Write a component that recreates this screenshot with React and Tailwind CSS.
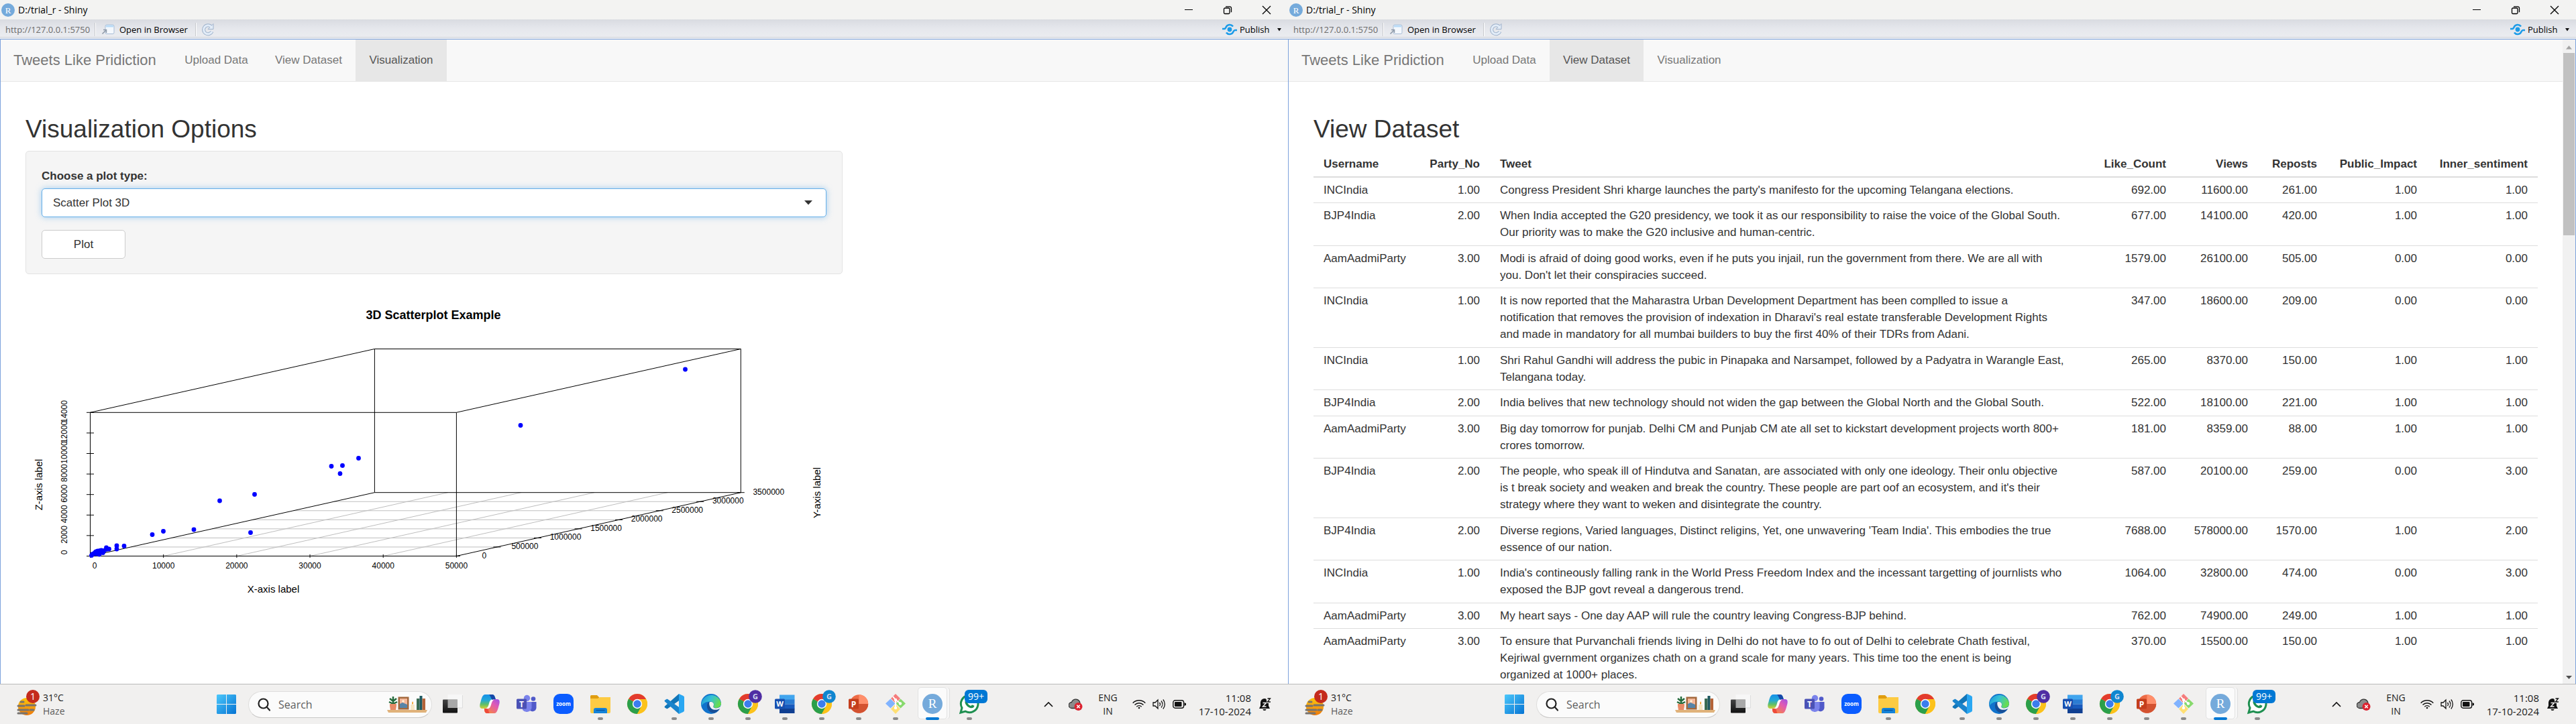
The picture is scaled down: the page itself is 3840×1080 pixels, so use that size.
import React from "react";

const rows = [
  ["INCIndia", "1.00", "Congress President Shri kharge launches the party's manifesto for the upcoming Telangana elections.", "692.00", "11600.00", "261.00", "1.00", "1.00"],
  ["BJP4India", "2.00", "When India accepted the G20 presidency, we took it as our responsibility to raise the voice of the Global South.\nOur priority was to make the G20 inclusive and human-centric.", "677.00", "14100.00", "420.00", "1.00", "1.00"],
  ["AamAadmiParty", "3.00", "Modi is afraid of doing good works, even if he puts you injail, run the government from there. We are all with\nyou. Don't let their conspiracies succeed.", "1579.00", "26100.00", "505.00", "0.00", "0.00"],
  ["INCIndia", "1.00", "It is now reported that the Maharastra Urban Development Department has been complled to issue a\nnotification that removes the provision of indexation in Dharavi's real estate transferable Development Rights\nand made in mandatory for all mumbai builders to buy the first 40% of their TDRs from Adani.", "347.00", "18600.00", "209.00", "0.00", "0.00"],
  ["INCIndia", "1.00", "Shri Rahul Gandhi will address the pubic in Pinapaka and Narsampet, followed by a Padyatra in Warangle East,\nTelangana today.", "265.00", "8370.00", "150.00", "1.00", "1.00"],
  ["BJP4India", "2.00", "India belives that new technology should not widen the gap between the Global North and the Global South.", "522.00", "18100.00", "221.00", "1.00", "1.00"],
  ["AamAadmiParty", "3.00", "Big day tomorrow for punjab. Delhi CM and Punjab CM ate all set to kickstart development projects worth 800+\ncrores tomorrow.", "181.00", "8359.00", "88.00", "1.00", "1.00"],
  ["BJP4India", "2.00", "The people, who speak ill of Hindutva and Sanatan, are associated with only one ideology. Their onlu objective\nis t break society and weaken and break the country. These people are part oof an ecosystem, and it's their\nstrategy where they want to weken and disintegrate the country.", "587.00", "20100.00", "259.00", "0.00", "3.00"],
  ["BJP4India", "2.00", "Diverse regions, Varied languages, Distinct religins, Yet, one unwavering 'Team India'. This embodies the true\nessence of our nation.", "7688.00", "578000.00", "1570.00", "1.00", "2.00"],
  ["INCIndia", "1.00", "India's contineously falling rank in the World Press Freedom Index and the incessant targetting of journlists who\nexposed the BJP govt reveal a dangerous trend.", "1064.00", "32800.00", "474.00", "0.00", "3.00"],
  ["AamAadmiParty", "3.00", "My heart says - One day AAP will rule the country leaving Congress-BJP behind.", "762.00", "74900.00", "249.00", "1.00", "1.00"],
  ["AamAadmiParty", "3.00", "To ensure that Purvanchali friends living in Delhi do not have to fo out of Delhi to celebrate Chath festival,\nKejriwal gvernment organizes chath on a grand scale for many years. This time too the enent is being\norganized at 1000+ places.", "370.00", "15500.00", "150.00", "1.00", "1.00"],
];

const columns = [
  ["Username", "w-[156px] text-left"],
  ["Party_No", "w-[107px] text-right"],
  ["Tweet", "text-left"],
  ["Like_Count", "w-[126px] text-right"],
  ["Views", "w-[122px] text-right"],
  ["Reposts", "w-[103px] text-right"],
  ["Public_Impact", "w-[149px] text-right"],
  ["Inner_sentiment", "w-[165px] text-right"],
];

/* ---------- window chrome ---------- */

function TitleBar() {
  return (
    <header className="flex h-[29px] items-center bg-[#f3f3f2] text-black">
      <svg className="ml-0.5 size-5" viewBox="0 0 20 20" aria-hidden="true">
        <circle cx="10" cy="10" r="10" fill="#75aadb" />
        <text x="10" y="14.500" fontSize="13" fill="#fff" textAnchor="middle" fontFamily="Liberation Serif, serif">R</text>
      </svg>
      <h1 className="ml-[5px] text-[14px] leading-5">D:/trial_r - Shiny</h1>
      <div className="ml-auto flex h-full items-center">
        <button aria-label="Minimize" className="flex h-full w-[58px] items-center justify-center">
          <svg width="14" height="14" viewBox="0 0 14 14"><path d="M1 6.500h12" stroke="#000" /></svg>
        </button>
        <button aria-label="Restore" className="flex h-full w-[58px] items-center justify-center">
          <svg width="14" height="14" viewBox="0 0 14 14" fill="none" stroke="#000" strokeWidth="1.300">
            <rect x="1.500" y="4" width="8.500" height="8.500" rx="1.500" />
            <path d="M4 1.800h6a2.500 2.500 0 0 1 2.500 2.500v6" />
          </svg>
        </button>
        <button aria-label="Close" className="mr-[3px] flex h-full w-[58px] items-center justify-center">
          <svg width="14" height="14" viewBox="0 0 14 14"><path d="M1 1l12 12M13 1L1 13" stroke="#000" strokeWidth="1.300" /></svg>
        </button>
      </div>
    </header>
  );
}

function Toolbar() {
  return (
    <div className="flex h-[30px] flex-col border-b border-[#7da2dc] bg-[#e9ebef]">
      <div className="flex h-[27px] items-center border-b border-[#d3d6dc] bg-gradient-to-b from-[#d9dbe1] via-[#e5e7ec] to-[#ebecf0] pt-1 text-[13px] leading-5 text-black">
        <span className="ml-2 w-[125px] whitespace-nowrap text-[#6b6b6b]">http://127.0.0.1:5750</span>
        <span className="ml-2 h-5 w-0.5 border-r border-white bg-[#c6c8cc]" />
        <button className="ml-2 flex items-center">
          <svg width="20" height="17" viewBox="0 0 20 17" fill="none" aria-hidden="true">
            <rect x="6" y="1" width="13" height="13.500" rx="2" fill="#f4f8fd" stroke="#a9bdd6" />
            <path d="M7 4.500V3a1.500 1.500 0 0 1 1.500-1.500h8A1.500 1.500 0 0 1 18 3v1.500z" fill="#b9dbf7" />
            <path d="M1.500 14.500l5-5M3 8.500h4.500V13" stroke="#8d99a8" strokeWidth="1.500" />
          </svg>
          <span className="ml-[7px] w-[103px] whitespace-nowrap text-left">Open in Browser</span>
        </button>
        <span className="ml-2.5 h-5 w-0.5 border-r border-white bg-[#c6c8cc]" />
        <button aria-label="Reload" className="ml-[7px]">
          <svg width="20" height="20" viewBox="0 0 20 20" fill="none">
            <path d="M15 6A6.500 6.500 0 1 0 16 13" stroke="#9fb2cb" strokeWidth="5" />
            <path d="M18 1.500v8h-8z" fill="#e2ecf8" stroke="#9fb2cb" />
            <path d="M15 6A6.500 6.500 0 1 0 16 13" stroke="#e2ecf8" strokeWidth="3" />
          </svg>
        </button>
        <button className="ml-auto mr-2.5 flex items-center">
          <svg width="22" height="18" viewBox="0 0 22 18" fill="none" stroke="#1b9be8" strokeWidth="2.600" aria-hidden="true">
            <circle cx="11" cy="9" r="3.400" fill="#1b9be8" stroke="none" />
            <path d="M0 8h3c1.500 0 1.800-1 2.600-2.500C7.500 1.500 13 .5 16 4.500" />
            <path d="M22 10h-3c-1.500 0-1.800 1-2.600 2.500C14.500 16.500 9 17.500 6 13.500" />
          </svg>
          <span className="ml-1 w-[45px] text-left">Publish</span>
          <svg className="ml-[11px]" width="6" height="5" viewBox="0 0 6 5" aria-hidden="true"><path d="M0 0h6L3 4.500z" fill="#111" /></svg>
        </button>
      </div>
    </div>
  );
}

function NavBar({ active }) {
  return (
    <nav className="flex h-[63px] items-start border-b border-[#e7e7e7] bg-[#f8f8f8] text-[#777]">
      <a href="#home" className="whitespace-nowrap px-[19px] pt-[18px] text-[22px] leading-[25px]">
        <span className="block w-[216px]">Tweets Like Pridiction</span>
      </a>
      {[
        ["Upload Data", "w-[135px]"],
        ["View Dataset", "w-[140px]"],
        ["Visualization", "w-[136px]"],
      ].map(([label, width]) => (
        <a
          key={label}
          href={"#" + label.toLowerCase().replace(" ", "-")}
          aria-current={label === active ? "page" : undefined}
          className={`flex h-[62px] justify-center whitespace-nowrap pt-[18px] text-[17px] leading-[25px] ${width} ${
            label === active ? "bg-[#e7e7e7] text-[#555]" : ""
          }`}
        >
          {label}
        </a>
      ))}
    </nav>
  );
}

/* ---------- 3D scatter plot ---------- */

const O = { x: 134.5, y: 829.5 };
const W = 545.9;
const H = 214.2;
const D = { x: 423.9, y: -94.8 };

const points = [
  [227, 797.5], [243.500, 792.5], [289, 790], [373.500, 794.5], [327.500, 747], [379.500, 737.5],
  [494, 695.5], [510.500, 694.5], [507, 706.5], [534.500, 683.5], [776, 634.5], [1021.500, 551],
  [185, 814.5], [174, 814], [174, 819], [158.500, 817], [162.500, 819], [136.500, 828.5], [138, 826.5],
  [140, 826], [141.500, 824.5], [143, 823], [144, 826], [145.500, 822], [147, 824.5], [148, 827],
  [149, 821.5], [150.500, 824], [152, 822], [153.500, 824.5], [155, 821.5], [158.500, 819.5], [151, 821],
];

function ScatterPlot() {
  const line = (x1, y1, x2, y2, key, stroke = "#000") => (
    <line key={key} x1={x1} y1={y1} x2={x2} y2={y2} stroke={stroke} />
  );
  const steps = (n) => Array.from({ length: n }, (_, i) => i);
  return (
    <svg
      className="mt-[15px] block w-[1217px] max-w-full"
      viewBox="38 424 1217 500"
      role="img"
      aria-label="3D Scatterplot Example"
      fontFamily="Liberation Sans, Arial, sans-serif"
      fill="none"
    >
      <text x="646" y="476" fontSize="18" fontWeight="bold" textAnchor="middle" fill="#000">3D Scatterplot Example</text>
      {steps(4).map((i) => {
        const x = O.x + (W / 5) * (i + 1);
        return line(x, O.y, x + D.x, O.y + D.y, "gx" + i, "#bebebe");
      })}
      {steps(6).map((i) => {
        const t = (i + 1) / 7;
        return line(O.x + D.x * t, O.y + D.y * t, O.x + W + D.x * t, O.y + D.y * t, "gy" + i, "#bebebe");
      })}
      <g>
        {line(O.x, O.y, O.x + W, O.y, "a")}
        {line(O.x, O.y, O.x, O.y - H, "b")}
        {line(O.x, O.y - H, O.x + W, O.y - H, "c")}
        {line(O.x + W, O.y, O.x + W, O.y - H, "d")}
        {line(O.x, O.y, O.x + D.x, O.y + D.y, "e")}
        {line(O.x, O.y - H, O.x + D.x, O.y - H + D.y, "f")}
        {line(O.x + W, O.y, O.x + W + D.x, O.y + D.y, "g")}
        {line(O.x + W, O.y - H, O.x + W + D.x, O.y - H + D.y, "h")}
        {line(O.x + D.x, O.y + D.y, O.x + D.x + W, O.y + D.y, "i")}
        {line(O.x + D.x, O.y - H + D.y, O.x + D.x + W, O.y - H + D.y, "j")}
        {line(O.x + D.x, O.y + D.y, O.x + D.x, O.y - H + D.y, "k")}
        {line(O.x + W + D.x, O.y + D.y, O.x + W + D.x, O.y - H + D.y, "l")}
        {steps(6).map((i) => line(O.x + (W / 5) * i, O.y - 2.5, O.x + (W / 5) * i, O.y + 2.5, "tx" + i))}
        {steps(8).map((i) => line(O.x - 5.5, O.y - (H / 7) * i, O.x + 5.5, O.y - (H / 7) * i, "tz" + i))}
        {steps(8).map((i) =>
          line(O.x + W + (D.x / 7) * i - 5.5, O.y + (D.y / 7) * i, O.x + W + (D.x / 7) * i + 5.5, O.y + (D.y / 7) * i, "ty" + i)
        )}
      </g>
      <g fill="#000" fontSize="12" textAnchor="middle">
        {steps(6).map((i) => (
          <text key={"x" + i} x={i === 0 ? 141 : O.x + (W / 5) * i} y="848">{i * 10000}</text>
        ))}
        {steps(8).map((i) => (
          <text key={"z" + i} transform={`translate(100 ${i === 0 ? 824 : O.y - 1.5 - (H / 7) * i}) rotate(-90)`}>{i * 2000}</text>
        ))}
        {steps(8).map((i) => (
          <text key={"y" + i} x={O.x + W + (D.x / 7) * i + 41.5} y={O.y + 3 + (D.y / 7) * i}>{i * 500000}</text>
        ))}
      </g>
      <g fill="#000" fontSize="15" textAnchor="middle">
        <text x="407.500" y="884">X-axis label</text>
        <text transform="translate(63 723) rotate(-90)">Z-axis label</text>
        <text transform="translate(1223 735) rotate(-90)">Y-axis label</text>
      </g>
      {points.map(([x, y], i) => (
        <circle key={i} cx={x} cy={y} r="3.400" fill="#00f" />
      ))}
    </svg>
  );
}

function VisualizationPage() {
  return (
    <main className="flex min-h-0 flex-1 flex-col overflow-hidden border-l border-[#7da2dc] bg-white">
      <NavBar active="Visualization" />
      <div className="px-[37px]">
        <h2 className="mt-[50px] text-[37px] leading-[41px] text-[#333]">Visualization Options</h2>
        <form
          className="mt-3 w-[66%] rounded-[5px] border border-[#e3e3e3] bg-[#f5f5f5] px-[23px] pb-[22px] pt-6 text-[17px] leading-[25px] text-[#333]"
          onSubmit={(e) => e.preventDefault()}
        >
          <label htmlFor="plot-type" className="block font-bold">Choose a plot type:</label>
          <div className="relative mt-[6px]">
            <select
              id="plot-type"
              className="block h-[43px] w-full appearance-none rounded-[5px] border border-[#66afe9] bg-white px-4 text-[17px] text-[#333] shadow-[0_0_10px_rgba(102,175,233,0.6)] outline-none"
            >
              <option>Scatter Plot 3D</option>
            </select>
            <svg className="pointer-events-none absolute right-[21px] top-[18px]" width="12" height="7" viewBox="0 0 12 7" aria-hidden="true">
              <path d="M0 0h12L6 6.500z" fill="#333" />
            </svg>
          </div>
          <button className="mt-[19px] block h-[43px] w-[125px] rounded-[5px] border border-[#ccc] bg-white">Plot</button>
        </form>
        <ScatterPlot />
      </div>
    </main>
  );
}

function DatasetPage() {
  return (
    <div className="flex min-h-0 flex-1 border-x border-[#7da2dc] bg-white">
      <main className="flex min-w-0 flex-1 flex-col overflow-hidden">
        <NavBar active="View Dataset" />
        <div className="px-[37px]">
          <h2 className="mt-[50px] text-[37px] leading-[41px] text-[#333]">View Dataset</h2>
          <table className="mt-3 w-full table-fixed border-separate border-spacing-0 text-[17px] leading-[25px] text-[#333]">
            <thead>
              <tr>
                {columns.map(([label, cls]) => (
                  <th key={label} className={`border-b-2 border-[#ddd] px-[15px] pb-[6px] pt-[7px] ${cls}`}>{label}</th>
                ))}
              </tr>
            </thead>
            <tbody>
              {rows.map((row, r) => (
                <tr key={r} className="[&>td]:pb-[6px] even:[&>td]:pb-[7px]">
                  {row.map((cell, c) => (
                    <td
                      key={c}
                      className={`whitespace-pre-line border-b border-[#ddd] px-[15px] pt-[6px] align-top ${
                        c === 0 || c === 2 ? "text-left" : "text-right"
                      }`}
                    >
                      {cell}
                    </td>
                  ))}
                </tr>
              ))}
            </tbody>
          </table>
        </div>
      </main>
      <div className="flex w-[19px] shrink-0 flex-col items-center bg-[#f1f1f1]" aria-hidden="true">
        <svg className="mt-2 h-[12px] w-[9px]" viewBox="0 0 9 12"><path d="M0 6.500h9L4.500 1z" fill="#a3a3a3" /></svg>
        <div className="h-[272px] w-[17px] bg-[#c1c1c1]" />
        <svg className="mb-1 mt-auto h-[12px] w-[9px]" viewBox="0 0 9 12"><path d="M0 4h9L4.500 9z" fill="#505050" /></svg>
      </div>
    </div>
  );
}

/* ---------- taskbar ---------- */

function Chrome({ badge }) {
  return (
    <>
      <circle cx="15" cy="15" r="15" fill="#fcc934" />
      <path d="M15 15L2 7.500A15 15 0 0 1 28 7.500z" fill="#e33b2e" />
      <path d="M15 15L2 7.500A15 15 0 0 0 15 30l6.500-11z" fill="#2b9f4a" />
      <path d="M15 8h13.300A15 15 0 0 1 15 30l6-11.500z" fill="#fcc21b" />
      <circle cx="15" cy="15" r="7.200" fill="#fff" />
      <circle cx="15" cy="15" r="5.700" fill="#3b7ded" />
      {badge && (
        <>
          <circle cx="26" cy="4" r="9.800" fill={badge} />
          <text x="26" y="8" fontSize="11" fontWeight="bold" fill="#d5dcf0" textAnchor="middle">G</text>
        </>
      )}
    </>
  );
}

const apps = [
  { name: "Task view", art: (
    <>
      <defs><linearGradient id="tv" x2="0" y2="1"><stop stopColor="#444" /><stop offset="1" stopColor="#111" /></linearGradient></defs>
      <rect x="0" y="8.500" width="22" height="20" rx="1" fill="url(#tv)" />
      <path d="M7.500 1h22v20h-7.500V8.500H7.500z" fill="#f7f7f7" />
      <path d="M7.500 8.500H22V21H7.500z" fill="#a9a9a9" />
      <path d="M29.500 2v19H22" fill="none" stroke="#ddd" />
    </>
  ) },
  { name: "Copilot", art: (
    <>
      <defs>
        <linearGradient id="cp1" x2="0" y2="1"><stop stopColor="#1690e8" /><stop offset=".4" stopColor="#22a8d8" /><stop offset=".7" stopColor="#5fbf68" /><stop offset="1" stopColor="#d6d136" /></linearGradient>
        <linearGradient id="cp2" x1="1" x2=".2" y2="1"><stop stopColor="#9a52e8" /><stop offset=".4" stopColor="#e05ab4" /><stop offset="1" stopColor="#f9863a" /></linearGradient>
      </defs>
      <path d="M8 1h11c3 0 4 4 5 7h-4c-4 0-5 3-6 6-1 5-3 8-7 8H4c-5 0-4-6-2.500-10C3 6 4.500 1 8 1z" fill="url(#cp1)" />
      <path d="M14 1h5c3 0 4 4 5 8h-5c-2-1-2-5-5-8z" fill="#1748a8" />
      <path d="M22 29H11c-3 0-4-3-4-7h3c4 0 5-3 6-6 1-5 3-8 7-8h3c5 0 4 6 2.500 10C27 24 25.500 29 22 29z" fill="url(#cp2)" />
      <path d="M15 29h-4c-3 0-4-3-4-7h4c3 1 2 6 4 7z" fill="#ee4b3a" />
      <path d="M17 9.500c2-.8 3-1 5-1-3 1-4 4-5 8-1 3-2 5-4 5.500-1 .2-2 .2-3 0 3-1 3.500-4 4.500-7 .5-2 1.200-4.500 2.500-5.500z" fill="#fff" />
    </>
  ) },
  { name: "Teams", art: (
    <>
      <circle cx="25" cy="7.500" r="3.300" fill="#5059c9" />
      <path d="M19 12h10.500v9a6 6 0 0 1-10.500 3z" fill="#5059c9" />
      <circle cx="15.500" cy="6.500" r="4.700" fill="#7b83eb" />
      <path d="M9 12h13.500v9a7.500 7 0 0 1-13.500 3z" fill="#7b83eb" />
      <rect x="0" y="7.500" width="15" height="15" rx="1.500" fill="#4a51b5" />
      <text x="7.500" y="19.500" fontSize="12" fontWeight="bold" fill="#fff" textAnchor="middle">T</text>
    </>
  ) },
  { name: "Zoom", art: (
    <>
      <rect x="0" y="0" width="30" height="30" rx="9.500" fill="#0b5cff" />
      <text x="15" y="17.500" fontSize="8" fontWeight="bold" fill="#fff" textAnchor="middle">zoom</text>
    </>
  ) },
  { name: "File Explorer", run: true, art: (
    <>
      <path d="M0 3.500A1.500 1.500 0 0 1 1.500 2H10l3 3v5H0z" fill="#e09d10" />
      <path d="M0 7h11l3-2h16v22a2 2 0 0 1-2 2H2a2 2 0 0 1-2-2z" fill="#fdcb43" />
      <path d="M5 29v-5a3 3 0 0 1 3-3h14a3 3 0 0 1 3 3v5z" fill="#1583d8" />
      <path d="M8.500 24.500h13" stroke="#0a529c" strokeWidth="1.300" />
    </>
  ) },
  { name: "Chrome", art: <Chrome /> },
  { name: "VS Code", run: true, art: (
    <>
      <path d="M22 0L1 18.500a1.500 1.500 0 0 0 0 2L3.500 22c.6.500 1.200.4 1.800 0L23 9.500z" fill="#1276b8" />
      <path d="M22 30L1 11.500a1.500 1.500 0 0 1 0-2L3.500 8c.6-.5 1.200-.4 1.800 0L23 20.500z" fill="#1a84cc" />
      <path d="M22 0l6.500 3A2.500 2.500 0 0 1 30 5v20a2.500 2.500 0 0 1-1.500 2L22 30z" fill="#2aa7f2" />
    </>
  ) },
  { name: "Edge", run: true, art: (
    <>
      <defs>
        <linearGradient id="ed1" y2=".4"><stop stopColor="#1b8fd8" /><stop offset=".5" stopColor="#35c1d8" /><stop offset="1" stopColor="#67dc52" /></linearGradient>
      </defs>
      <circle cx="15" cy="15" r="15" fill="#1173cc" />
      <path d="M1 12A15 15 0 0 1 30 14c0 5-4 7-8 7-3 0-4-1-3-3 .7-1.500 1-6-5-6.500C8 11 3 14 .5 18z" fill="url(#ed1)" />
      <path d="M11 12.500c-3 2.500-3 9 1 13 2 2 5 3.500 8 3 4-1.500 6.500-4 8-7-6 3-11 2-13.500-.5-2-2-3-6 0-8.500z" fill="#174f97" />
      <path d="M12.500 12.500c3-1.500 7 .5 6.500 4-.3 1.500-1 2.500-.5 3.500 1 2 6 2 10-.5l1.500-3v4.500l-1.500 1c-6 3-11 2-13.500-.5-2-2.500-3.500-6-2.500-9z" fill="#f2f1f0" />
    </>
  ) },
  { name: "Chrome profile 1", run: true, art: <Chrome badge="#4f2da3" /> },
  { name: "Word", run: true, art: (
    <>
      <path d="M7 1.500h22.500V9H7z" fill="#41a5ee" /><path d="M7 8.500h22.500v7H7z" fill="#2b7cd3" />
      <path d="M7 15.500h22.500v7H7z" fill="#185abd" /><path d="M7 22h22.500v7H7z" fill="#103f91" />
      <rect x="0" y="7.500" width="15" height="15" rx="1.500" fill="#1850b0" />
      <text x="7.500" y="19" fontSize="11" fontWeight="bold" fill="#fff" textAnchor="middle">W</text>
    </>
  ) },
  { name: "Chrome profile 2", run: true, art: <Chrome badge="#0f86d0" /> },
  { name: "PowerPoint", run: true, art: (
    <>
      <circle cx="15.500" cy="15" r="13.700" fill="#ed6c47" />
      <path d="M15.500 1.300A13.700 13.700 0 0 1 29.200 15H15.500z" fill="#ff8f6b" />
      <path d="M1.800 15h27.400a13.700 13.700 0 0 1-27.400 0z" fill="#d35230" />
      <rect x="0" y="7.500" width="15" height="15" rx="1.500" fill="#c43e1c" />
      <text x="7.500" y="19.500" fontSize="12" fontWeight="bold" fill="#fff" textAnchor="middle">P</text>
    </>
  ) },
  { name: "Git", run: true, art: (
    <>
      <path d="M15 0l7 7-7 7-7-7z" fill="#f57c7c" /><path d="M7.500 7.500l7 7-7 7-7.500-7z" fill="#80b3ff" />
      <path d="M22.500 7.500l7.500 7-7.500 7-7-7z" fill="#87d96c" /><path d="M15 15.500l7 7-7 7.500-7-7.500z" fill="#ffdf73" />
      <path d="M11 4l4 5v13M15 9l7 5" stroke="#fff" strokeWidth="2" fill="none" />
      <circle cx="15" cy="9" r="2.200" fill="#fff" /><circle cx="22" cy="14.500" r="2.200" fill="#fff" /><circle cx="15" cy="21" r="2.200" fill="#fff" />
    </>
  ) },
  { name: "RStudio", active: true, art: (
    <>
      <circle cx="15" cy="15" r="15" fill="#75aadb" />
      <text x="15" y="21" fontSize="19" fill="#fff" textAnchor="middle" fontFamily="Liberation Serif, serif">R</text>
    </>
  ) },
  { name: "WhatsApp", run: true, art: (
    <>
      <path d="M2 28l2-7a12.800 12.800 0 1 1 5 5z" fill="#fff" stroke="#1f8f50" strokeWidth="3" />
      <path d="M9.500 9.500c1-1.500 2.500-1.500 3 0l1 2.200c.2.800-.8 1.500-1.200 2 1.300 2.300 2.700 3.400 5 4.300l1.700-1.800 3.500 1.600c-.5 3.500-4 4.200-7 3-4-1.600-7.500-6-7-9.300z" fill="#1f8f50" />
      <rect x="8" y="-6" width="34" height="20" rx="6" fill="#0078d4" />
      <text x="25" y="9" fontSize="14" fill="#fff" textAnchor="middle">99+</text>
    </>
  ) },
];

function SearchArt() {
  return (
    <svg className="shrink-0" width="60" height="26" viewBox="0 0 60 26" aria-hidden="true">
      <path d="M0 21h60l-2 4H2z" fill="#e0b27a" />
      <path d="M9 14V4M9 8L4 4M9 8l5-4M9 12l-6-3M9 12l6-3M9 5V1" stroke="#256b3c" strokeWidth="2.500" />
      <path d="M4 12h10v3l-1 6H5l-1-6z" fill="#e88a66" />
      <rect x="16.500" y="1.500" width="16" height="19" fill="#a3683c" />
      <rect x="19" y="4" width="11" height="14" fill="#f3b79a" />
      <path d="M19 12l4-2 7 3v5H19z" fill="#5684a8" /><circle cx="24" cy="8" r="1.800" fill="#fff1d8" />
      <rect x="35" y="13" width="6" height="8" fill="#f7e6c4" /><path d="M38 13c-2-2 0-4 0-5 1 2 2 3 0 5z" fill="#f2a024" />
      <rect x="44" y="4" width="4.500" height="17" fill="#3a6b52" /><rect x="48.500" y="0" width="4" height="21" fill="#1e5960" /><rect x="52.500" y="4" width="4.500" height="17" fill="#b4643a" />
    </svg>
  );
}

function Taskbar() {
  return (
    <footer className="flex h-[60px] shrink-0 items-center border-t border-[#b9b9b9] bg-[#f1f0ef] text-[#1b1b1b]">
      <button className="flex w-[323px] shrink-0 items-center pl-[25px] text-left">
        <svg width="34" height="43" viewBox="0 0 34 43" aria-hidden="true">
          <defs><linearGradient id="haze" x2="0" y2="1"><stop stopColor="#fbc60f" /><stop offset="1" stopColor="#ee7a0c" /></linearGradient></defs>
          <circle cx="15" cy="25" r="13" fill="url(#haze)" />
          <path d="M6 18h4M14 23h14M2 24h9M2 30h15M20 30h5M2 35h13" stroke="#77736f" strokeWidth="3" strokeLinecap="round" />
          <circle cx="24" cy="10" r="10" fill="#c42b1c" />
          <text x="24" y="15" fontSize="14" fill="#fff" textAnchor="middle">1</text>
        </svg>
        <span className="ml-[5px] text-[14px] leading-5">
          <span className="block">31°C</span>
          <span className="block text-[#5c5c5c]">Haze</span>
        </span>
      </button>
      <button aria-label="Start">
        <svg width="29" height="29" viewBox="0 0 29 29">
          <defs><linearGradient id="win" x2="1" y2="1"><stop stopColor="#4cc8fb" /><stop offset="1" stopColor="#0573d3" /></linearGradient></defs>
          <path d="M1 0h13v14H0V1zM15 0h13l1 1v13H15zM0 15h14v14H1l-1-1zM15 15h14v13l-1 1H15z" fill="url(#win)" />
        </svg>
      </button>
      <label className="ml-[18px] flex h-10 w-[274px] shrink-0 items-center rounded-full border border-[#dedddc] border-b-[#c9c8c7] bg-[#fbfbfb] pl-[13px] pr-1.5">
        <svg className="shrink-0" width="19" height="20" viewBox="0 0 19 20" fill="none" stroke="#222" strokeWidth="2.200" aria-hidden="true">
          <circle cx="8.500" cy="8.500" r="7" /><path d="M13.500 13.500l4.500 5" strokeLinecap="round" />
        </svg>
        <input type="text" aria-label="Search" placeholder="Search" className="ml-3 w-full min-w-0 bg-transparent text-base placeholder-[#5e5e5e] outline-none" />
        <SearchArt />
      </label>
      <div className="ml-[3px] flex">
        {apps.map((app) => (
          <button key={app.name} aria-label={app.name} className="flex h-[60px] w-[55px] flex-col items-center pt-1">
            <span className={`flex h-[48px] w-11 flex-col items-center rounded-[5px] pt-[9px] ${app.active ? "border border-[#e2e2e2] bg-[#fbfbfb] shadow-[4px_0_0_-1px_#f7f7f7,5px_0_0_-1px_#dedede]" : "border border-transparent"}`}>
              <svg className="shrink-0 overflow-visible" width="30" height="30" viewBox="0 0 30 30">{app.art}</svg>
              {app.run && <i className="mt-[5px] h-1 w-2 shrink-0 rounded-full bg-[#8a8a8a]" />}
              {app.active && <i className="mt-[5px] h-1 w-5 shrink-0 rounded-full bg-[#0078d4]" />}
            </span>
          </button>
        ))}
      </div>
      <div className="ml-auto flex shrink-0 items-center pr-[25px]">
        <svg width="14" height="8" viewBox="0 0 14 8" fill="none" aria-hidden="true"><path d="M1 7l6-6 6 6" stroke="#111" strokeWidth="1.700" /></svg>
        <svg className="ml-[23px]" width="21" height="18" viewBox="0 0 21 18" aria-hidden="true">
          <path d="M5 14.500a4.500 4.500 0 0 1-.5-9A6.500 6.500 0 0 1 16 4c1.500 2 1 5 1 10.500z" fill="#8c8c8c" stroke="#333" strokeWidth="1.300" />
          <circle cx="14.500" cy="12" r="6" fill="#dc2230" /><path d="M12.300 9.800l4.400 4.400M16.700 9.800l-4.400 4.400" stroke="#fff" strokeWidth="1.600" />
        </svg>
        <button className="ml-[22px] w-[31px] text-center text-[14px] leading-5">ENG<br />IN</button>
        <svg className="ml-[21px]" width="20" height="15" viewBox="0 0 20 15" fill="none" stroke="#111" strokeWidth="1.400" aria-hidden="true">
          <path d="M.7 5.700a13 13 0 0 1 18.600 0M3.500 8.500a9 9 0 0 1 13 0M6.300 11.200a5.200 5.200 0 0 1 7.400 0" /><circle cx="10" cy="13" r="1.300" fill="#111" stroke="none" />
        </svg>
        <svg className="ml-[10px]" width="20" height="17" viewBox="0 0 20 17" fill="none" stroke="#111" strokeWidth="1.300" aria-hidden="true">
          <path d="M1 6h3l4-4v13l-4-4H1zM10.500 6a4 4 0 0 1 0 5M13 3.500a8 8 0 0 1 0 10M15.800 1.500a11 11 0 0 1 0 14" />
        </svg>
        <svg className="ml-[10px]" width="20" height="13" viewBox="0 0 20 13" aria-hidden="true">
          <rect x=".8" y=".8" width="15.800" height="11.400" rx="3" fill="none" stroke="#111" strokeWidth="1.400" /><rect x="3" y="3" width="10.500" height="7" rx="1" fill="#111" /><path d="M17.500 4l2.500 1.300v2.400L17.500 9z" fill="#111" />
        </svg>
        <button className="w-[97px] text-right text-[15px] leading-5">11:08<br />17-10-2024</button>
        <svg className="ml-3" width="18" height="20" viewBox="0 0 18 20" aria-hidden="true">
          <path d="M8 1a6 6 0 0 1 6 6v5l2 4H0l2-4V7a6 6 0 0 1 6-6zM5.500 17h5a2.500 2 0 0 1-5 0z" fill="#111" />
          <path d="M10 0h8v8h-6z" fill="#f1f0ef" />
          <path d="M12.500 1h4L12.500 6h4.500" stroke="#111" strokeWidth="1.300" fill="none" />
          <path d="M5.500 7.500h5l-5 5.500h5" stroke="#f1f0ef" strokeWidth="1.500" fill="none" />
        </svg>
      </div>
    </footer>
  );
}

function Desktop({ children }) {
  return (
    <section className="flex min-w-0 flex-1 flex-col overflow-hidden font-['Open_Sans','Segoe_UI',sans-serif]">
      <TitleBar />
      <Toolbar />
      <div className="flex min-h-0 flex-1 flex-col font-['Liberation_Sans',Arial,sans-serif]">{children}</div>
      <Taskbar />
    </section>
  );
}

export default function App() {
  return (
    <div className="flex h-screen w-full overflow-hidden bg-white">
      <Desktop><VisualizationPage /></Desktop>
      <Desktop><DatasetPage /></Desktop>
    </div>
  );
}
